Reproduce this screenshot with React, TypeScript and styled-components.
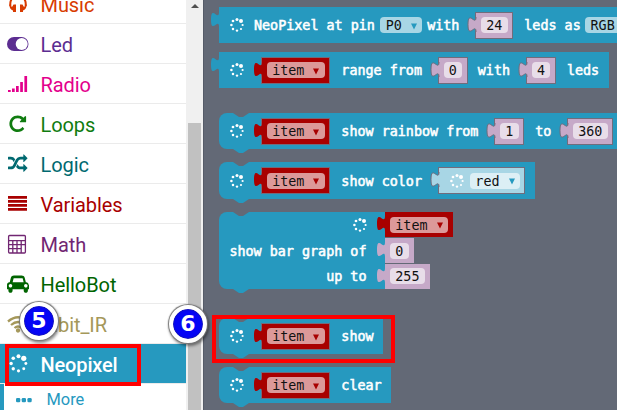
import React from "react";
import styled, { createGlobalStyle, css } from "styled-components";

const BLUE = "#2699bf";
const SLATE = "#636976";

const Global = createGlobalStyle`
  body { margin: 0; overflow: hidden; }
  * { box-sizing: border-box; }
`;

const Editor = styled.main`
  position: relative;
  display: flex;
  width: 617px;
  height: 410px;
  overflow: hidden;
  background: ${SLATE};
`;

const Toolbox = styled.nav`
  width: 186px;
  flex: none;
  height: 410px;
  overflow: hidden;
  background: #fff;
  font-family: Roboto, sans-serif;
`;

const Category = styled.div<{ $color: string; $selected?: boolean; $first?: boolean }>`
  display: flex;
  align-items: center;
  height: 40px;
  margin-top: ${(p) => (p.$first ? "-16px" : 0)};
  padding: 3px 0 0 6px;
  border-bottom: 1px solid #ebebeb;
  color: ${(p) => (p.$selected ? "#fff" : p.$color)};
  font-size: 20px;
  letter-spacing: ${(p) => (p.$selected ? -0.15 : -0.07)}px;
  line-height: 36px;
  font-weight: ${(p) => (p.$selected ? 500 : 400)};
  background: ${(p) => (p.$selected ? p.$color : "transparent")};
`;

const IconSlot = styled.span`
  display: flex;
  align-items: center;
  justify-content: center;
  width: 24px;
  height: 24px;
  margin: 0 10.5px 3px 0;
`;

const SubCategory = styled.div`
  display: flex;
  align-items: center;
  height: 32px;
  padding-left: 12px;
  border-left: 4px solid ${BLUE};
  color: ${BLUE};
  font-size: 16.4px;
  line-height: 20px;
  gap: 14.5px;
`;

const ScrollTrack = styled.div`
  display: flex;
  flex-direction: column;
  align-items: center;
  width: 18px;
  flex: none;
  background: #f0f0f0;
  border-right: 1px solid #555b68;
`;

const ScrollArrow = styled.svg`
  display: block;
  flex: none;
  margin-top: 4px;
`;

const ScrollThumb = styled.div`
  width: 13px;
  height: 300px;
  flex: none;
  margin-top: 115px;
  background: #c1c1c1;
`;

const Flyout = styled.section`
  display: flex;
  flex-direction: column;
  align-items: flex-start;
  padding: 7px 0 0 15px;
  font: 13.4px/16px "DejaVu Sans Mono", monospace;
  white-space: pre;
`;

const Block = styled.div<{ $gap?: number; $h?: number; $statement?: boolean }>`
  position: relative;
  display: flex;
  align-items: center;
  height: ${(p) => p.$h ?? 36}px;
  flex: none;
  margin-top: ${(p) => p.$gap ?? 0}px;
  padding: 0 9.5px 0 11px;
  background: ${BLUE};
  color: #fff;
  ${(p) => p.$statement && css`border-radius: 8px 0 0 8px;`}
`;

const StackBlock = styled(Block)`
  flex-direction: column;
  align-items: flex-end;
  width: 166px;
  padding: 0;
`;

const StackRow = styled.div`
  display: flex;
  align-items: center;
  justify-content: flex-end;
  height: 26px;
  margin-right: -70px;
`;

const StackSocket = styled.div`
  width: 70px;
  display: flex;
  margin-left: 18.5px;
`;

const Label = styled.span<{ $l?: number }>`
  flex: none;
  margin-left: ${(p) => p.$l ?? 0}px;
  padding-top: 2px;
  -webkit-text-stroke: 0.55px #fff;
`;

const Value = styled.span<{ $bg: string; $l?: number; $flush?: boolean }>`
  position: relative;
  display: flex;
  align-items: center;
  flex: none;
  height: ${(p) => (p.$flush ? 25 : 27)}px;
  margin-left: ${(p) => p.$l ?? 0}px;
  padding: 0 ${(p) => (p.$flush ? 5 : 4.6)}px;
  background: ${(p) => p.$bg};
  border: ${(p) => (p.$flush ? "0" : "1px solid #716c7c")};
`;

const Field = styled.span<{ $bg: string; $l?: number }>`
  display: flex;
  align-items: center;
  flex: none;
  height: 16px;
  margin-left: ${(p) => p.$l ?? 0}px;
  padding: 2px 5.3px 0;
  border-radius: 4px;
  background: ${(p) => p.$bg};
  color: #111;
`;

const Caret = styled.svg`
  margin-left: 9px;
  flex: none;
`;

const TabShape = styled.svg`
  position: absolute;
  left: -8px;
  top: 5px;
  overflow: visible;
`;

const InnerTabShape = styled(TabShape)`
  top: 4px;
`;

const NotchShape = styled.svg<{ $bottom?: boolean }>`
  position: absolute;
  left: 14px;
  ${(p) => (p.$bottom ? "bottom: -4px;" : "top: 0;")}
`;

const Frame = styled.div<{ $x: number; $y: number; $w: number; $h: number }>`
  position: absolute;
  left: ${(p) => p.$x}px;
  top: ${(p) => p.$y}px;
  width: ${(p) => p.$w}px;
  height: ${(p) => p.$h}px;
  border: 4px solid #fe0000;
`;

const StepBadge = styled.div<{ $x: number; $y: number }>`
  position: absolute;
  left: ${(p) => p.$x - 19}px;
  top: ${(p) => p.$y - 19}px;
  display: flex;
  align-items: center;
  justify-content: center;
  width: 38px;
  height: 38px;
  border: 4px solid #fff;
  border-radius: 50%;
  background: #0505f5;
  background-clip: padding-box;
  box-shadow: inset 0 0 2px #335, 0 0 1px 1px #777, 1px 2px 3px 1px rgba(0, 0, 0, 0.45);
  color: #fff;
  font: 700 22px/30px "DejaVu Sans", sans-serif;
`;

const dots: [number, number, number][] = [
  [10, 3, 1.9], [15, 5, 2.5], [17, 10, 1.4], [15, 15, 1.4],
  [10, 17, 1.5], [5, 15, 1.6], [3, 10, 1.6], [5, 5, 1.7],
];

const Spinner = ({ size = 18 }: { size?: number }) => (
  <svg width={size} height={size} viewBox="0 0 20 20" fill="currentColor">
    {dots.map(([x, y, r]) => <circle key={`${x}-${y}`} cx={x} cy={y} r={r} />)}
  </svg>
);

const SpinnerSlot = styled.span`
  display: flex;
  justify-content: center;
  flex: none;
  width: 14px;
  svg { flex: none; }
`;

const BlockIcon = () => <SpinnerSlot><Spinner size={16} /></SpinnerSlot>;

const ValueIcon = styled.span`
  display: flex;
  margin-left: 6.5px;
  color: #fff;
`;

const Glyph = ({ d, w = 1792 }: { d: string; w?: number }) => (
  <svg width={(w * 19.5) / 1792} height={19.5} viewBox={`0 0 ${w} 1792`} fill="currentColor"><path d={d} /></svg>
);

const REPEAT = "M1664 256v448q0 26-19 45t-45 19h-448q-42 0-59-40-17-39 14-69l138-138q-148-137-349-137-104 0-198.5 40.5t-163.5 109.5-109.5 163.5-40.5 198.5 40.5 198.5 109.5 163.5 163.5 109.5 198.5 40.5q119 0 225-52t179-147q7-10 23-12 15 0 25 9l137 138q9 8 9.5 20.5t-7.5 22.5q-109 132-264 204.5t-327 72.5q-156 0-298-61t-245-164-164-245-61-298 61-298 164-245 245-164 298-61q147 0 284.5 55.5t244.5 156.5l130-129q29-31 70-14 39 17 39 59z";
const SHUFFLE = "M666 481q-60 92-137 273-22-45-37-72.5t-40.5-63.5-51-56.5-63-35-81.5-14.5h-224q-14 0-23-9t-9-23v-192q0-14 9-23t23-9h224q250 0 410 225zm1126 799q0 14-9 23l-320 320q-9 9-23 9-13 0-22.5-9.5t-9.5-22.5v-192q-32 0-85 .5t-81 1-73-1-71-5-64-10.5-63-18.5-58-28.5-59-40-55-53.5-56-69.5q59-93 136-273 22 45 37 72.5t40.5 63.5 51 56.5 63 35 81.5 14.5h256v-192q0-14 9-23t23-9q12 0 24 10l319 319q9 9 9 23zm0-896q0 14-9 23l-320 320q-9 9-23 9-13 0-22.5-9.5t-9.5-22.5v-192h-256q-48 0-87 15t-69 45-51 61.5-45 77.5q-32 62-78 171-29 66-49.5 111t-54 105-64 100-74 83-90 68.5-106.5 42-128 16.5h-224q-14 0-23-9t-9-23v-192q0-14 9-23t23-9h224q48 0 87-15t69-45 51-61.5 45-77.5q32-62 78-171 29-66 49.5-111t54-105 64-100 74-83 90-68.5 106.5-42 128-16.5h256v-192q0-14 9-23t23-9q12 0 24 10l319 319q9 9 9 23z";
const CAR = "M480 1088q0-66-47-113t-113-47-113 47-47 113 47 113 113 47 113-47 47-113zm36-320h1016l-89-357q-2-8-14-17.5t-21-9.5h-768q-9 0-21 9.5t-14 17.5zm1372 320q0-66-47-113t-113-47-113 47-47 113 47 113 113 47 113-47 47-113zm160-96v384q0 14-9 23t-23 9h-96v128q0 80-56 136t-136 56-136-56-56-136v-128h-1024v128q0 80-56 136t-136 56-136-56-56-136v-128h-96q-14 0-23-9t-9-23v-384q0-93 65.5-158.5t158.5-65.5h28l105-419q23-94 104-157.5t179-63.5h704q98 0 179 63.5t104 157.5l105 419h28q93 0 158.5 65.5t65.5 158.5z";

const Headphones = () => (
  <svg width="24" height="24" viewBox="0 0 24 24" fill="currentColor">
    <path d="M4.300 14v-2.500a7.700 7.700 0 0 1 15.400 0V14" fill="none" stroke="currentColor" strokeWidth="2" />
    <path d="M3.300 12c0 4 1.500 6 3.700 6.500V20h3v-7.500H7.500L6 15zM20.700 12c0 4-1.500 6-3.700 6.500V20h-3v-7.500h2.500L18 15z" />
  </svg>
);
const Toggle = () => (
  <svg width="24" height="24" viewBox="0 0 24 24">
    <rect x="1" y="5" width="21.500" height="14" rx="7" fill="currentColor" />
    <circle cx="15.700" cy="12" r="6" fill="#fff" />
  </svg>
);
const Signal = () => (
  <svg width="24" height="24" viewBox="0 0 24 24" fill="currentColor">
    <path d="M2 18h2.700v2H2zM6 16.500h2.700V20H6zM10 14h2.700v6H10zM14.200 10h2.700v10h-2.700zM18.400 4h2.700v16h-2.700z" />
  </svg>
);
const Bars = () => (
  <svg width="24" height="24" viewBox="0 0 24 24" fill="currentColor">
    <path d="M2 4h19v2.700H2zM2 8h19v2.700H2zM2 12h19v2.700H2zM2 16h19v2.700H2z" />
  </svg>
);
const Calculator = () => (
  <svg width="24" height="24" viewBox="0 0 24 24" fill="none" stroke="currentColor" strokeWidth="1.300">
    <rect x="2.600" y="3.500" width="16.800" height="17.500" rx="1" />
    <path d="M2.500 8.700h17M2.500 12.700h17M2.500 16.700h13M6.800 8.700v12.300M11 8.700v12.300M15.200 8.700v12.300" />
  </svg>
);
const Wifi = () => (
  <svg width="24" height="24" viewBox="0 0 24 24" fill="none" stroke="currentColor" strokeWidth="2.300">
    <path d="M2 9.500q10-8.500 20 0M5 13q7-6 14 0M8.500 16q3.500-3 7 0" />
    <circle cx="12" cy="18.500" r="1" />
  </svg>
);
const MoreDots = () => (
  <svg width="16" height="6" viewBox="0 0 16 6" fill="currentColor">
    <rect x="0" y="1" width="4.300" height="4.300" rx="1.300" />
    <rect x="5.700" y="1" width="4.300" height="4.300" rx="1.300" />
    <rect x="11.400" y="1" width="4.300" height="4.300" rx="1.300" />
  </svg>
);

const categories: { name: string; color: string; icon: React.ReactNode; selected?: boolean }[] = [
  { name: "Music", color: "#d83b01", icon: <Headphones /> },
  { name: "Led", color: "#5c2d91", icon: <Toggle /> },
  { name: "Radio", color: "#e3008c", icon: <Signal /> },
  { name: "Loops", color: "#107c10", icon: <Glyph d={REPEAT} /> },
  { name: "Logic", color: "#006970", icon: <Glyph d={SHUFFLE} /> },
  { name: "Variables", color: "#a80000", icon: <Bars /> },
  { name: "Math", color: "#712672", icon: <Calculator /> },
  { name: "HelloBot", color: "#006400", icon: <Glyph d={CAR} w={2048} /> },
  { name: "mbit_IR", color: "#a5985a", icon: <Wifi /> },
  { name: "Neopixel", color: BLUE, icon: <Spinner size={21} />, selected: true },
];

const tabPath = "M8 0c0 10-8-8-8 7.500s8-2.500 8 7.500";
const Tab = () => (
  <TabShape width="9" height="15" viewBox="0 0 9 15"><path d={`${tabPath}h1V0z`} fill={BLUE} /></TabShape>
);
const InnerTab = ({ fill, outline }: { fill: string; outline: boolean }) => (
  <InnerTabShape width="9" height="15" viewBox="0 0 9 15">
    <path d={`${tabPath}h1V0z`} fill={fill} />
    {outline && <path d={tabPath} fill="none" stroke="#716c7c" />}
  </InnerTabShape>
);
const Notches = () => (
  <>
    <NotchShape width="16" height="5" viewBox="0 0 16 5"><path d="M0 0l6 4h4l6-4z" fill={SLATE} /></NotchShape>
    <NotchShape $bottom width="16" height="5" viewBox="0 0 16 5"><path d="M0 0v1l6 4h4l6-4V0z" fill={BLUE} /></NotchShape>
  </>
);

const Arrow = ({ fill }: { fill: string }) => (
  <Caret width="6" height="7" viewBox="0 0 6 7"><path d="M0 .5h6L3 6.500z" fill={fill} /></Caret>
);

const Item = ({ l, flush }: { l?: number; flush?: boolean }) => (
  <Value $bg="#a80000" $l={l} $flush={flush}>
    <InnerTab fill="#a80000" outline={false} />
    <Field $bg="#dc9999">item<Arrow fill="#a80000" /></Field>
  </Value>
);
const Num = ({ children, l = 16, flush }: { children: string; l?: number; flush?: boolean }) => (
  <Value $bg="#c6a9c8" $l={l} $flush={flush}>
    <InnerTab fill="#c6a9c8" outline={!flush} />
    <Field $bg="#e8dde9">{children}</Field>
  </Value>
);

export default function App() {
  return (
    <>
      <Global />
      <Editor>
        <Toolbox>
          {categories.map((c, i) => (
            <Category key={c.name} $color={c.color} $selected={c.selected} $first={i === 0}>
              <IconSlot>{c.icon}</IconSlot>{c.name}
            </Category>
          ))}
          <SubCategory><MoreDots />More</SubCategory>
        </Toolbox>
        <ScrollTrack>
          <ScrollArrow width="8" height="4" viewBox="0 0 8 4"><path d="M4 0l4 4H0z" fill="#505050" /></ScrollArrow>
          <ScrollThumb />
        </ScrollTrack>
        <Flyout>
          <Block>
            <Tab /><BlockIcon />
            <Label $l={10}>NeoPixel at pin</Label>
            <Field $bg="#a8d6e5" $l={5.5}>P0<Arrow fill={BLUE} /></Field>
            <Label $l={5}>with</Label><Num>24</Num>
            <Label $l={11}>leds as</Label>
            <Field $bg="#a8d6e5" $l={4.5}>RGB<Arrow fill={BLUE} /></Field>
          </Block>
          <Block $gap={9}>
            <Tab /><BlockIcon /><Item l={17.3} />
            <Label $l={11}>range from</Label><Num>0</Num>
            <Label $l={10}>with</Label><Num>4</Num>
            <Label $l={11}>leds</Label>
          </Block>
          <Block $gap={25} $statement>
            <Notches /><BlockIcon /><Item l={17.3} />
            <Label $l={11}>show rainbow from</Label><Num>1</Num>
            <Label $l={11}>to</Label><Num>360</Num>
          </Block>
          <Block $gap={13} $h={37} $statement>
            <Notches /><BlockIcon /><Item l={17.3} />
            <Label $l={11}>show color</Label>
            <Value $bg="#a8d6e5" $l={16}>
              <InnerTab fill="#a8d6e5" outline />
              <ValueIcon><BlockIcon /></ValueIcon>
              <Field $bg="#dceff5" $l={6}>red<Arrow fill={BLUE} /></Field>
            </Value>
          </Block>
          <StackBlock $gap={13} $h={77} $statement>
            <Notches />
            <StackRow><BlockIcon /><StackSocket><Item flush /></StackSocket></StackRow>
            <StackRow><Label>show bar graph of</Label><StackSocket><Num l={0} flush>0</Num></StackSocket></StackRow>
            <StackRow><Label>up to</Label><StackSocket><Num l={0} flush>255</Num></StackSocket></StackRow>
          </StackBlock>
          <Block $gap={29} $statement>
            <Notches /><BlockIcon /><Item l={17.3} /><Label $l={11}>show</Label>
          </Block>
          <Block $gap={13} $statement>
            <Notches /><BlockIcon /><Item l={17.3} /><Label $l={11}>clear</Label>
          </Block>
        </Flyout>
        <Frame $x={5} $y={344} $w={136} $h={42} />
        <Frame $x={212} $y={315} $w={183} $h={48} />
        <StepBadge $x={39} $y={321}>5</StepBadge>
        <StepBadge $x={188} $y={324}>6</StepBadge>
      </Editor>
    </>
  );
}
